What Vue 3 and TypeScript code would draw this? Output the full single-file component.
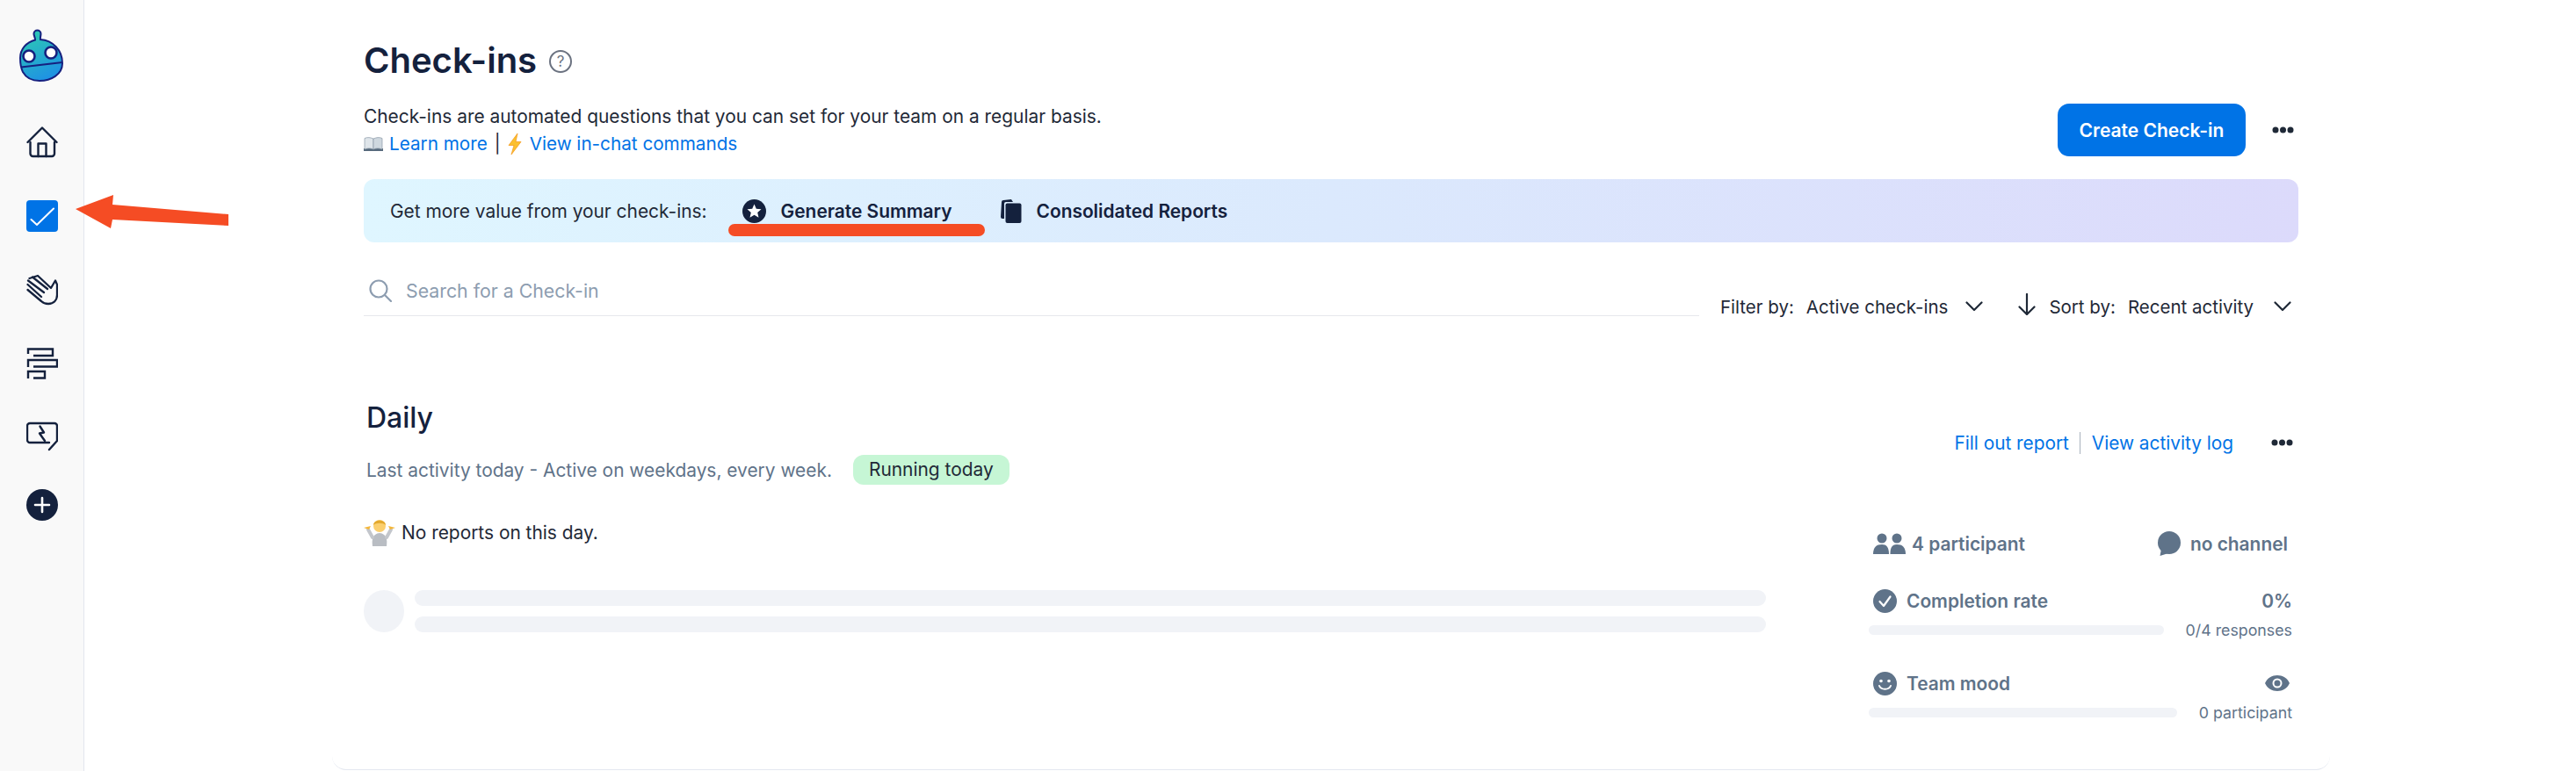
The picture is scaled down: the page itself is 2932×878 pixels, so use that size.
<script setup lang="ts">
interface SkeletonBar { id: number }
const bars: SkeletonBar[] = [{ id: 1 }, { id: 2 }]
</script>

<template>
  <div class="page">
    <aside class="rail">
      <svg class="robot" width="50" height="60" viewBox="0 0 50 60" aria-label="logo">
        <defs>
          <linearGradient id="rb" x1="0.3" y1="0" x2="0.7" y2="1">
            <stop offset="0" stop-color="#2cc8b4" />
            <stop offset="1" stop-color="#1e8fe6" />
          </linearGradient>
        </defs>
        <path d="M18 12.500 C18 9 16.500 8 16.500 5.500 A4 4 0 0 1 24.500 5.500 C24.500 8 23.500 9.500 24 12 C38 13 49 24 49 39 C49 52 36 59 23 59 C15 59 8 56 4 49 C1.500 44 1 38 1 33 C1 23 8 15 18 12.500 Z" fill="url(#rb)" stroke="#16207f" stroke-width="2" />
        <path d="M2 43.500 L49 38" stroke="#16207f" stroke-width="2.200" fill="none" />
        <circle cx="11" cy="31" r="6.500" fill="#fff" stroke="#16207f" stroke-width="2.600" />
        <circle cx="36" cy="27" r="6.500" fill="#fff" stroke="#16207f" stroke-width="2.600" />
      </svg>
      <svg class="nav-icon first" viewBox="0 0 36 36" fill="none" stroke="#14213d" stroke-width="2.400" stroke-linejoin="round" stroke-linecap="round">
        <path d="M1.500 18 L18 1.500 L34.500 18" />
        <path d="M4.500 18 V31 A3 3 0 0 0 7.500 34 H29 A3 3 0 0 0 32 31 V18" />
        <path d="M13.500 34 V19.500 H22.500 V34" />
      </svg>
      <svg class="nav-icon" viewBox="0 0 36 36">
        <rect width="36" height="36" rx="4" fill="#0073e6" />
        <path d="M5.500 22 L12 28 L31 9.500" fill="none" stroke="#fff" stroke-width="2" stroke-linecap="round" stroke-linejoin="round" />
      </svg>
      <svg class="nav-icon" viewBox="0 0 36 36" fill="none" stroke="#14213d" stroke-width="2.300" stroke-linecap="round" stroke-linejoin="round">
        <path d="M3.500 5 L13 2 L28 16 L33 7.500 L35 12 V24 C35 30 31 34 25 34 C21 34 19 33 17 31 L1.500 18" />
        <path d="M1.500 12 L17 26 M2 7.500 L20 21 M7 3.500 L24 17" />
      </svg>
      <svg class="nav-icon" viewBox="0 0 36 36" fill="none" stroke="#14213d" stroke-width="2.400">
        <path d="M2 7 V1.500 H30 V9 H8" />
        <path d="M2 22 V14 H35 V21.500 H8" />
        <path d="M2 35 V27 H21 V34.500 H8" />
      </svg>
      <svg class="nav-icon" viewBox="0 0 36 36" fill="none" stroke="#14213d" stroke-width="2.400" stroke-linecap="round" stroke-linejoin="round">
        <path d="M26 24 H4 A3 3 0 0 1 1 21 V5 A3 3 0 0 1 4 2 H32 A3 3 0 0 1 35 5 V22 L26 32" />
        <path d="M15.500 5.500 L20 12.500 L15 13.500 L21 22" />
      </svg>
      <svg class="nav-icon last" viewBox="0 0 36 36">
        <circle cx="18" cy="18" r="18" fill="#14213d" />
        <path d="M18 10 V26 M10 18 H26" stroke="#fff" stroke-width="2.600" stroke-linecap="round" />
      </svg>
    </aside>

    <main class="main">
      <header class="top">
        <div class="title-row">
          <h1 class="title">Check-ins</h1>
          <span class="help">?</span>
        </div>
        <div class="intro-row">
          <div class="intro">
            <p class="intro-line">Check-ins are automated questions that you can set for your team on a regular basis.</p>
            <p class="intro-line links">
              <svg class="book" width="22" height="16" viewBox="0 0 22 16">
                <rect x="0" y="13" width="22" height="3" fill="#56697c" />
                <path d="M1 1.500 C4 0 8 0.500 11 2 V14 C8 12.500 4 12.500 1 14 Z" fill="#dfe5ea" stroke="#8b9aa8" stroke-width="0.700" />
                <path d="M21 1.500 C18 0 14 0.500 11 2 V14 C14 12.500 18 12.500 21 14 Z" fill="#cfd8df" stroke="#8b9aa8" stroke-width="0.700" />
              </svg>
              <a class="link">Learn more</a>
              <span class="pipe">|</span>
              <svg class="zap" width="16" height="24" viewBox="0 0 16 24">
                <path d="M11 0 L1 13.500 H7 L4 24 L15 9.500 H9 Z" fill="#fbc02d" stroke="#f59e24" stroke-width="0.800" />
              </svg>
              <a class="link">View in-chat commands</a>
            </p>
          </div>
          <div class="top-actions">
            <button class="primary">Create Check-in</button>
            <svg class="dots" width="25" height="8" viewBox="0 0 25 8"><circle cx="4" cy="4" r="3.500" /><circle cx="12.500" cy="4" r="3.500" /><circle cx="21" cy="4" r="3.500" /></svg>
          </div>
        </div>
        <div class="promo">
          <span class="promo-lead">Get more value from your check-ins:</span>
          <span class="promo-item first-promo">
            <svg width="27" height="27" viewBox="0 0 27 27">
              <circle cx="13.500" cy="13.500" r="13.500" fill="#14213d" />
              <path d="M13.500 5.500 L15.800 10.700 L21.500 11.300 L17.200 15 L18.500 20.700 L13.500 17.700 L8.500 20.700 L9.800 15 L5.500 11.300 L11.200 10.700 Z" fill="#fff" />
            </svg>
            Generate Summary
          </span>
          <span class="promo-item">
            <svg width="25" height="27" viewBox="0 0 25 27">
              <path d="M2 3 Q2 1 4 1 L13 0 L15 3 H7 Q5 3 5 5 V22 H3 Q1 22 1 20 Z" fill="#14213d" />
              <rect x="6.500" y="4.500" width="18" height="22.500" rx="2" fill="#14213d" />
            </svg>
            Consolidated Reports
          </span>
        </div>
        <div class="filters">
          <div class="search">
            <svg width="26" height="26" viewBox="0 0 26 26" fill="none" stroke="#8d9db0" stroke-width="2.200" stroke-linecap="round">
              <circle cx="11" cy="11" r="9.500" />
              <path d="M18 18 L25 25" />
            </svg>
            <span>Search for a Check-in</span>
          </div>
          <div class="filter first-filter">
            <span>Filter by:</span>
            <span>Active check-ins</span>
            <svg class="chev" width="20" height="12" viewBox="0 0 20 12" fill="none" stroke="#1f2937" stroke-width="2.200" stroke-linecap="round" stroke-linejoin="round"><path d="M1.500 1.500 L10 10 L18.500 1.500" /></svg>
          </div>
          <div class="filter">
            <svg class="sort" width="20" height="25" viewBox="0 0 20 25" fill="none" stroke="#1f2937" stroke-width="2.200" stroke-linecap="round" stroke-linejoin="round"><path d="M10 1 V24 M1.500 15.500 L10 24 L18.500 15.500" /></svg>
            <span>Sort by:</span>
            <span>Recent activity</span>
            <svg class="chev last-chev" width="20" height="12" viewBox="0 0 20 12" fill="none" stroke="#1f2937" stroke-width="2.200" stroke-linecap="round" stroke-linejoin="round"><path d="M1.500 1.500 L10 10 L18.500 1.500" /></svg>
          </div>
        </div>
      </header>

      <section class="card">
        <div class="card-head">
          <div>
            <h2 class="card-title">Daily</h2>
            <div class="meta">
              <span>Last activity today - Active on weekdays, every week.</span>
              <span class="pill">Running today</span>
            </div>
          </div>
          <div class="card-actions">
            <a class="link">Fill out report</a>
            <span class="divider"></span>
            <a class="link">View activity log</a>
            <svg class="dots card-dots" width="25" height="8" viewBox="0 0 25 8"><circle cx="4" cy="4" r="3.500" /><circle cx="12.500" cy="4" r="3.500" /><circle cx="21" cy="4" r="3.500" /></svg>
          </div>
        </div>
        <div class="card-body">
          <div class="reports">
            <div class="empty">
              <svg width="36" height="32" viewBox="0 0 36 32">
                <path d="M10 32 C9 24 10 18 18 17 C26 18 27 24 26 32 Z" fill="#b9bdc3" />
                <path d="M10 22 L5 13 M26 22 L31 13" stroke="#c3c6cb" stroke-width="4" stroke-linecap="round" />
                <path d="M0 11 L6 13 L8 9 Z M36 11 L30 13 L28 9 Z" fill="#f4b63a" />
                <circle cx="18" cy="9" r="7" fill="#fbcf6e" />
                <path d="M11 8 C11 1 25 1 25 8 C22 5 14 5 11 8 Z" fill="#e3a92e" />
              </svg>
              <span>No reports on this day.</span>
            </div>
            <div class="skeleton">
              <span class="sk-dot"></span>
              <div class="sk-lines">
                <span v-for="b in bars" :key="b.id" class="sk-line"></span>
              </div>
            </div>
          </div>
          <div class="stats">
            <div class="stat-top summary">
              <span class="stat-label tight">
                <svg width="37" height="24" viewBox="0 0 37 24" fill="#5f7389">
                  <circle cx="10" cy="6" r="5.500" /><circle cx="27" cy="6" r="5.500" />
                  <path d="M0 24 C0 16 4 13 10 13 C15 13 18 16 18 24 Z" />
                  <path d="M19.500 24 C19.500 17 21 13 27 13 C33 13 37 16 37 24 Z" />
                </svg>
                4 participant
              </span>
              <span class="stat-label">
                <svg width="27" height="28" viewBox="0 0 27 28" fill="#5f7389">
                  <circle cx="14" cy="13" r="13" />
                  <path d="M5 20 L3.500 28 L13 25 Z" />
                </svg>
                no channel
              </span>
            </div>
            <div class="stat-block">
              <div class="stat-top">
                <span class="stat-label">
                  <svg width="27" height="27" viewBox="0 0 27 27">
                    <circle cx="13.500" cy="13.500" r="13.500" fill="#5f7389" />
                    <path d="M7.500 14 L12 19 L19.500 8.500" fill="none" stroke="#fff" stroke-width="2.200" stroke-linecap="round" stroke-linejoin="round" />
                  </svg>
                  Completion rate
                </span>
                <span class="stat-value">0%</span>
              </div>
              <div class="stat-bottom">
                <span class="bar"></span>
                <span class="stat-sub">0/4 responses</span>
              </div>
            </div>
            <div class="stat-block">
              <div class="stat-top">
                <span class="stat-label">
                  <svg width="27" height="27" viewBox="0 0 27 27">
                    <circle cx="13.500" cy="13.500" r="13.500" fill="#5f7389" />
                    <circle cx="9" cy="10.500" r="1.800" fill="#fff" /><circle cx="18" cy="10.500" r="1.800" fill="#fff" />
                    <path d="M7 16 C9 21 18 21 20 16" fill="none" stroke="#fff" stroke-width="2" stroke-linecap="round" />
                  </svg>
                  Team mood
                </span>
                <svg class="eye" width="28" height="18" viewBox="0 0 28 18">
                  <path d="M0 9 C5 -3 23 -3 28 9 C23 21 5 21 0 9 Z" fill="#5f7389" />
                  <circle cx="14" cy="9" r="5.500" fill="#fff" />
                  <circle cx="14" cy="9" r="3.500" fill="#5f7389" />
                </svg>
              </div>
              <div class="stat-bottom">
                <span class="bar"></span>
                <span class="stat-sub">0 participant</span>
              </div>
            </div>
          </div>
        </div>
      </section>
    </main>

    <svg class="annotation-arrow" width="180" height="44" viewBox="0 0 180 44">
      <path d="M0 20 L43 4 L42 15 L174 26 L174 39 L42 32 L40 42 Z" fill="#f54c24" />
    </svg>
    <span class="annotation-line"></span>
  </div>
</template>

<style scoped>
.page {
  position: relative;
  display: flex;
  width: 2932px;
  height: 878px;
  overflow: hidden;
  background: #fff;
  color: #1f2937;
  font-family: Inter, "Noto Sans", sans-serif;
  font-size: 20.900px;
}
.rail {
  box-sizing: border-box;
  flex: 0 0 96px;
  display: flex;
  flex-direction: column;
  padding: 33px 0 0 22px;
  background: #f9f9f9;
  border-right: 1px solid #e3e6ee;
}
.robot { display: block; }
.nav-icon {
  display: block;
  width: 36px;
  height: 36px;
  margin: 48px 0 0 8px;
  flex: none;
}
.nav-icon.first { margin-top: 51px; }
.nav-icon.last { margin-top: 41px; }
.main {
  box-sizing: border-box;
  width: 2274px;
  margin-left: 282px;
  display: flex;
  flex-direction: column;
}
.top { padding: 0 36px; }
.title-row {
  display: flex;
  align-items: center;
  gap: 14px;
  height: 48px;
  margin-top: 45px;
}
.title {
  margin: 0;
  font-size: 40px;
  line-height: 48px;
  font-weight: 600;
  color: #14213d;
}
.help {
  box-sizing: border-box;
  width: 26px;
  height: 26px;
  margin-top: 2px;
  border: 2px solid #6b7280;
  border-radius: 50%;
  color: #6b7280;
  font-size: 17px;
  line-height: 22px;
  text-align: center;
}
.intro-row {
  display: flex;
  justify-content: space-between;
  align-items: center;
  height: 62px;
  margin-top: 24px;
}
.intro-line {
  margin: 0;
  line-height: 31px;
  color: #1f2937;
}
.links {
  display: flex;
  align-items: center;
  font-size: 20.700px;
}
.book { margin-right: 7px; }
.pipe { margin: 0 8px; }
.zap { margin-right: 9px; }
.link { color: #0073e6; }
.top-actions {
  display: flex;
  align-items: center;
  gap: 30px;
  padding-right: 5px;
}
.primary {
  width: 214px;
  height: 60px;
  border: 0;
  border-radius: 13px;
  background: #0073e6;
  color: #fff;
  font: 600 21px Inter, sans-serif;
}
.dots { display: block; fill: #1f2937; }
.promo {
  box-sizing: border-box;
  display: flex;
  align-items: center;
  height: 72px;
  margin-top: 25px;
  padding-left: 30px;
  border-radius: 12px;
  background: linear-gradient(90deg, #dff6ff 0%, #dbe9fd 50%, #dcdafb 100%);
}
.promo-item {
  display: flex;
  align-items: center;
  gap: 17px;
  margin-left: 54px;
  font-weight: 600;
  color: #14213d;
}
.first-promo { margin-left: 40px; }
.filters {
  display: flex;
  align-items: flex-end;
  height: 84px;
}
.search {
  box-sizing: border-box;
  display: flex;
  align-items: center;
  gap: 16px;
  flex: 0 0 1520px;
  height: 60px;
  padding: 2px 0 0 6px;
  border-bottom: 1px solid #e6e8ec;
  color: #8d9db0;
  font-size: 21.300px;
}
.filter {
  display: flex;
  align-items: center;
  gap: 14px;
  height: 24px;
  margin-bottom: -1px;
  font-size: 20.500px;
}
.first-filter { margin-left: 24px; }
.first-filter + .filter { margin-left: 40px; }
.chev { margin-left: 6px; }
.last-chev { margin-left: 9px; }
.sort { margin-top: -6px; margin-right: 1px; }
.card {
  box-sizing: border-box;
  height: 515px;
  margin-top: 2px;
  padding: 0 36px;
  border-bottom: 1px solid #e4e8f0;
  border-radius: 0 0 16px 16px;
}
.card-head {
  display: flex;
  justify-content: space-between;
  padding-top: 92px;
}
.card-title {
  margin: 0;
  font-size: 32px;
  line-height: 44px;
  font-weight: 500;
  color: #14213d;
  padding-left: 3px;
}
.meta {
  display: flex;
  align-items: center;
  gap: 24px;
  margin-top: 20px;
  padding-left: 3px;
  color: #5f7389;
}
.pill {
  padding: 0 18px;
  height: 34px;
  line-height: 34px;
  border-radius: 12px;
  background: #c6f6d5;
  color: #1f2937;
}
.card-actions {
  display: flex;
  align-items: center;
  align-self: flex-start;
  height: 26px;
  margin-top: 37px;
  margin-right: 6px;
  font-size: 20.800px;
}
.divider {
  width: 1px;
  height: 25px;
  margin: 0 13px 0 12px;
  background: #a8b2bd;
}
.card-dots { margin-left: 43px; }
.card-body {
  display: flex;
  justify-content: space-between;
  margin-top: 38px;
}
.reports { width: 1596px; }
.empty {
  display: flex;
  align-items: center;
  gap: 7px;
  height: 32px;
  color: #1f2937;
}
.skeleton {
  display: flex;
  gap: 12px;
  margin-top: 50px;
}
.sk-dot {
  flex: 0 0 46px;
  height: 48px;
  border-radius: 50%;
  background: #f1f3f7;
}
.sk-lines {
  flex: 1;
  display: flex;
  flex-direction: column;
  gap: 12px;
}
.sk-line {
  height: 18px;
  border-radius: 9px;
  background: #f1f3f7;
}
.stats {
  width: 482px;
  margin-top: 14px;
  margin-right: 7px;
  display: flex;
  flex-direction: column;
  gap: 36px;
}
.stat-top {
  display: flex;
  justify-content: space-between;
  align-items: center;
  height: 28px;
  padding-left: 5px;
}
.summary { height: 30px; padding-right: 5px; }
.stat-label {
  display: flex;
  align-items: center;
  gap: 11px;
  font-weight: 600;
  color: #5f7389;
}
.tight { gap: 7px; }
.stat-value { font-weight: 600; color: #5f7389; }
.eye { margin-right: 3px; }
.stat-bottom {
  display: flex;
  align-items: center;
  gap: 25px;
  height: 22px;
  margin-top: 8px;
}
.bar {
  flex: 1;
  height: 11px;
  border-radius: 6px;
  background: #f1f3f7;
}
.stat-sub { font-size: 17.800px; color: #5f7389; }
.annotation-arrow { position: absolute; left: 86px; top: 218px; }
.annotation-line {
  position: absolute;
  left: 829px;
  top: 255px;
  width: 292px;
  height: 14px;
  border-radius: 7px;
  background: #f54c24;
}
</style>
